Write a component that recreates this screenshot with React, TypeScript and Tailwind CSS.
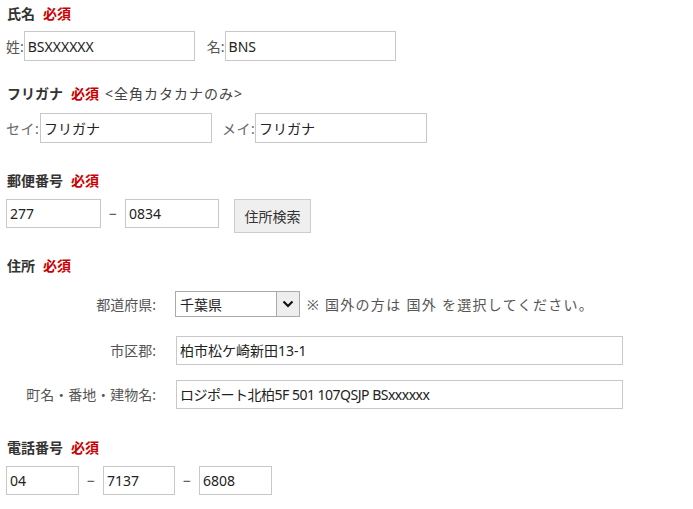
import React from "react";

const font = { fontFamily: '"Noto Sans", "Noto Sans CJK JP", sans-serif' };

function Req() {
  return <span className="ml-2 font-bold text-[#c00]">必須</span>;
}

function Heading({ children }: { children: React.ReactNode }) {
  return (
    <div className="h-[20px] flex items-center text-[14px] leading-[20px] font-bold text-[#333] pl-[1px]">
      {children}
    </div>
  );
}

function Field({ w, value, h = "h-[30px]" }: { w: string; value: string; h?: string }) {
  return (
    <div className={`${w} ${h} shrink-0 border border-[#c8c8c8] bg-white flex items-center pl-[3px] text-[14px] text-[#222] whitespace-nowrap overflow-hidden`}>
      {value}
    </div>
  );
}

function Dash() {
  return <span className="text-[14px] text-[#444] w-[24px] shrink-0 text-center">−</span>;
}

export default function App() {
  return (
    <div className="w-[693px] h-[509px] bg-white pl-[6px] pt-[4px]" style={font}>
      {/* 氏名 */}
      <Heading>
        氏名<Req />
      </Heading>
      <div className="mt-[7px] flex items-center text-[14px] text-[#555]">
        <span>姓:</span>
        <Field w="w-[171px]" value="BSXXXXXX" />
        <span className="ml-[12px]">名:</span>
        <Field w="w-[171px]" value="BNS" />
      </div>

      {/* フリガナ */}
      <div className="mt-[23px]">
        <Heading>
          フリガナ<Req />
          <span className="ml-[6px] font-normal text-[#444] tracking-[1px]">&lt;全角カタカナのみ&gt;</span>
        </Heading>
      </div>
      <div className="mt-[9px] flex items-center text-[14px] text-[#666] whitespace-nowrap">
        <span className="w-[34px] shrink-0 tracking-[0.5px]">セイ:</span>
        <Field w="w-[172px]" value="フリガナ" />
        <span className="ml-[10px] w-[33px] shrink-0 tracking-[0.5px]">メイ:</span>
        <Field w="w-[172px]" value="フリガナ" />
      </div>

      {/* 郵便番号 */}
      <div className="mt-[28px]">
        <Heading>
          郵便番号<Req />
        </Heading>
      </div>
      <div className="mt-[8px] flex items-start">
        <Field w="w-[95px]" h="h-[29px]" value="277" />
        <div className="h-[29px] flex items-center justify-center w-[24px]">
          <Dash />
        </div>
        <Field w="w-[94px]" h="h-[29px]" value="0834" />
        <div className="ml-[15px] w-[77px] h-[34px] border border-[#ccc] bg-[#efefef] flex items-center justify-center text-[14px] text-[#333]">
          住所検索
        </div>
      </div>

      {/* 住所 */}
      <div className="mt-[23px]">
        <Heading>
          住所<Req />
        </Heading>
      </div>
      <div className="mt-[15px] flex items-center text-[14px] text-[#555]">
        <span className="w-[150px] text-right">都道府県:</span>
        <div className="ml-[19px] w-[125px] h-[26px] border border-[#aaa] bg-white flex items-stretch">
          <div className="flex-1 flex items-center pl-[4px] text-[#222]">千葉県</div>
          <div className="w-[23px] border-l border-[#aaa] bg-[#eee] flex items-center justify-center">
            <svg width="12" height="8" viewBox="0 0 12 8">
              <path d="M1.5 1.5 L6 6 L10.5 1.5" fill="none" stroke="#111" strokeWidth="2.2" />
            </svg>
          </div>
        </div>
        <span className="ml-[7px] text-[#555] tracking-[1.3px]">※ 国外の方は 国外 を選択してください。</span>
      </div>
      <div className="mt-[19px] flex items-center text-[14px] text-[#555]">
        <span className="w-[150px] text-right">市区郡:</span>
        <div className="ml-[20px]">
          <Field w="w-[447px]" h="h-[29px]" value="柏市松ケ崎新田13-1" />
        </div>
      </div>
      <div className="mt-[15px] flex items-center text-[14px] text-[#555]">
        <span className="w-[150px] text-right">町名・番地・建物名:</span>
        <div className="ml-[20px]">
          <div className="w-[447px] h-[29px] border border-[#c8c8c8] bg-white flex items-center pl-[3px] text-[14px] text-[#222] whitespace-nowrap overflow-hidden tracking-[-0.5px]">
            ロジポート北柏5F 501 107QSJP BSxxxxxx
          </div>
        </div>
      </div>

      {/* 電話番号 */}
      <div className="mt-[29px]">
        <Heading>
          電話番号<Req />
        </Heading>
      </div>
      <div className="mt-[8px] flex items-center">
        <Field w="w-[73px]" h="h-[29px]" value="04" />
        <Dash />
        <Field w="w-[72px]" h="h-[29px]" value="7137" />
        <Dash />
        <Field w="w-[73px]" h="h-[29px]" value="6808" />
      </div>
    </div>
  );
}
